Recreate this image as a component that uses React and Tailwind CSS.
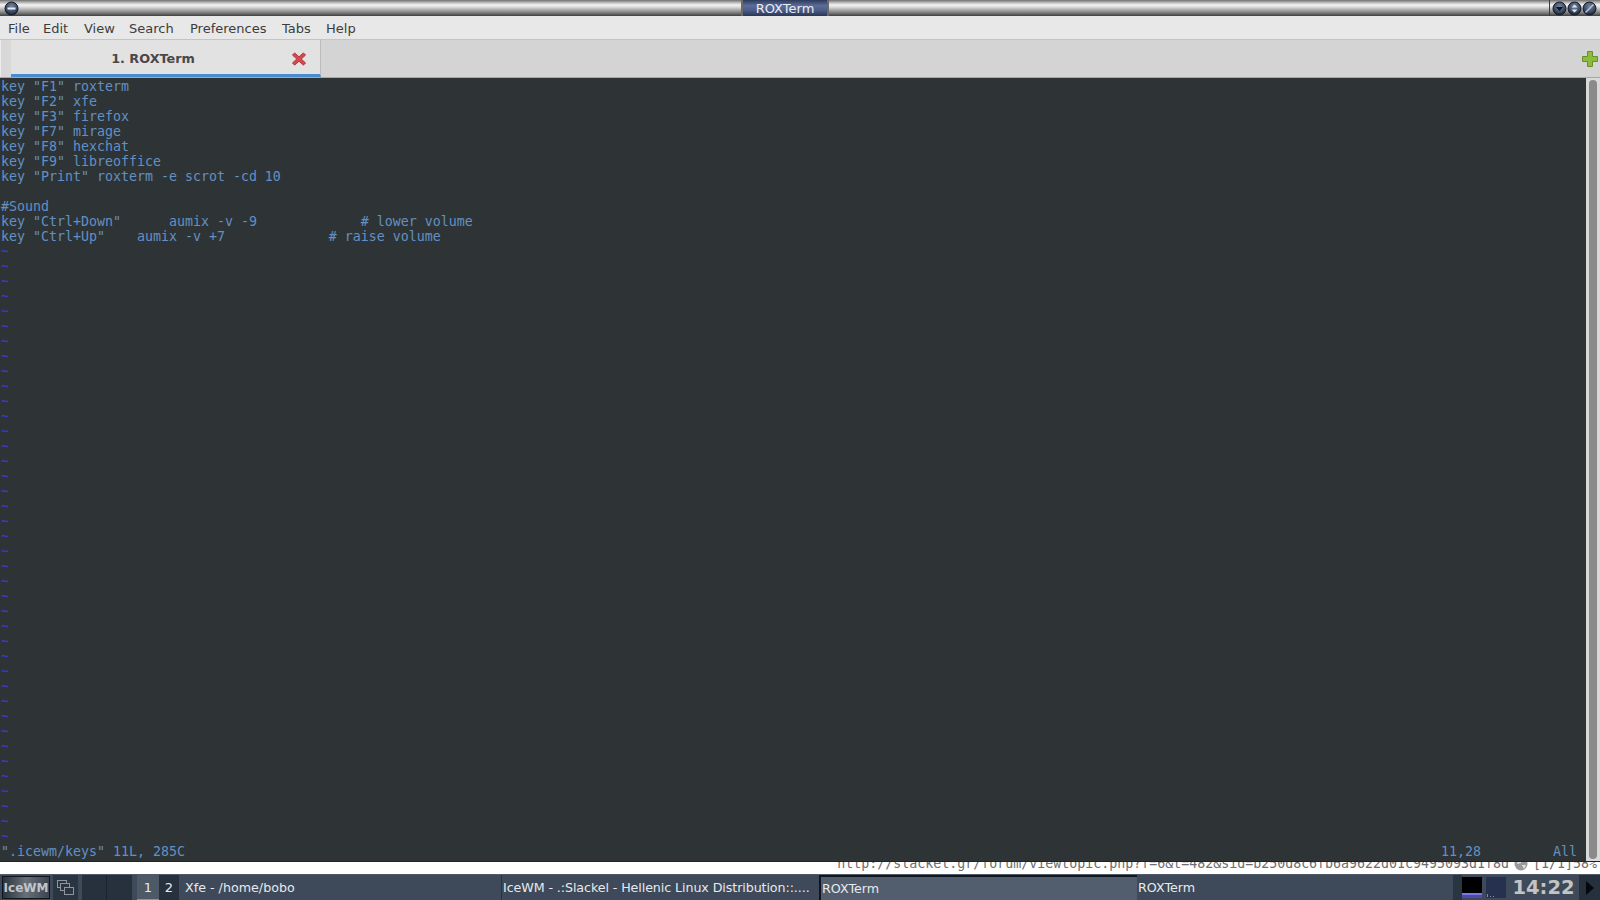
import React from "react";

const lines = [
  'key "F1" roxterm',
  'key "F2" xfe',
  'key "F3" firefox',
  'key "F7" mirage',
  'key "F8" hexchat',
  'key "F9" libreoffice',
  'key "Print" roxterm -e scrot -cd 10',
  ' ',
  '#Sound',
  'key "Ctrl+Down"      aumix -v -9             # lower volume',
  'key "Ctrl+Up"    aumix -v +7             # raise volume',
];
const tildes = Array.from({ length: 40 }, (_, i) => i);
const menus = [
  ["File", "w-[35px]"],
  ["Edit", "w-[41px]"],
  ["View", "w-[45px]"],
  ["Search", "w-[61px]"],
  ["Preferences", "w-[92px]"],
  ["Tabs", "w-[44px]"],
  ["Help", "w-[50px]"],
];

function WinButton({ children }) {
  return (
    <svg width="15" height="15" viewBox="0 0 15 15" className="shrink-0">
      <defs>
        <radialGradient id="wb" cx="50%" cy="35%" r="60%">
          <stop offset="0%" stopColor="#7688a6" />
          <stop offset="70%" stopColor="#3d4a63" />
          <stop offset="100%" stopColor="#20283a" />
        </radialGradient>
      </defs>
      <circle cx="7.5" cy="7.5" r="6.5" fill="url(#wb)" stroke="#141a26" />
      {children}
    </svg>
  );
}

function Task({ className, children }) {
  return <div className={"flex items-center h-full overflow-hidden whitespace-nowrap text-[12.7px] " + className}>{children}</div>;
}

export default function App() {
  return (
    <div className="w-[1600px] h-[900px] flex flex-col overflow-hidden bg-[#e8e8e8] font-['DejaVu_Sans',sans-serif]">
      {/* title bar */}
      <div className="h-[16px] shrink-0 flex items-center bg-[linear-gradient(to_bottom,#6f6f6f_0%,#a8a8a8_12%,#f2f2f2_30%,#e0e0e0_42%,#b0b0b0_60%,#7c7c7c_80%,#3e3e3e_100%)]">
        <div className="pl-[4px] w-[740px] flex items-center">
          <WinButton><rect x="3.5" y="6.5" width="8" height="2" fill="#e8ecf2" /></WinButton>
        </div>
        <div className="w-[88px] h-[16px] ml-[1px] flex items-center justify-center border-x-2 border-[#6a6a6a] bg-[linear-gradient(to_bottom,#2c3a5c,#5a6c98_35%,#4c5c86_65%,#2a3552)] text-[#e8ecf4] text-[13px] leading-none">
          ROXTerm
        </div>
        <div className="flex-1" />
        <div className="flex items-center h-[16px] border-l border-[#3a3a3a] pl-[2px] pr-[3px]">
          <WinButton><path d="M4 6 h7 l-3.5 4 z" fill="#0c1220" /></WinButton>
          <WinButton><path d="M4.5 6.5 L7.5 3.5 L10.5 6.5 z M4.5 8.5 L7.5 11.5 L10.5 8.5 z" fill="#dfe4ec" /></WinButton>
          <WinButton><path d="M3.5 11.5 L11.5 3.5" stroke="#b6c4da" strokeWidth="1.6" /></WinButton>
        </div>
      </div>

      {/* menu bar */}
      <div className="h-[24px] shrink-0 flex items-center pl-[8px] pt-[2px] bg-[#e8e8e8] text-[#3c3c3c] text-[13px] border-b border-[#c4c4c4]">
        {menus.map(([m, w]) => (
          <div key={m} className={w}>{m}</div>
        ))}
      </div>

      {/* tab bar */}
      <div className="h-[38px] shrink-0 flex items-stretch bg-[#d4d4d4] border-b border-[#a8a8a8]">
        <div className="w-[11px] bg-[#d8d8d8] border-l border-[#ececec]" />
        <div className="w-[310px] flex items-center pt-[3px] bg-[#e2e2e2] border-b-[3px] border-[#4a8cd0] border-r border-r-[#bdbdbd]">
          <div className="w-[281px] pl-[3px] text-center font-semibold text-[12.8px] text-[#484848]">1. ROXTerm</div>
          <svg width="14" height="14" viewBox="0 0 16 16">
            <path d="M3 1 L8 5.5 L13 1 L15.5 3.5 L10.5 8 L15.5 12.5 L13 15 L8 10.5 L3 15 L0.5 12.5 L5.5 8 L0.5 3.5 Z" fill="#d9484c" stroke="#a82f33" />
          </svg>
        </div>
        <div className="flex-1" />
        <div className="flex items-center pr-[2px]">
          <svg width="16" height="16" viewBox="0 0 16 16">
            <path d="M5.5 0.5 H10.5 V5.5 H15.5 V10.5 H10.5 V15.5 H5.5 V10.5 H0.5 V5.5 H5.5 Z" fill="#8cbc3e" stroke="#6a8f2a" />
          </svg>
        </div>
      </div>

      {/* terminal */}
      <div className="h-[783px] shrink-0 flex bg-[#2e3436] overflow-hidden">
        <div className="flex-1 pl-px pt-[1px] font-['DejaVu_Sans_Mono',monospace] text-[13.29px] leading-[15px] text-[#6390c4] whitespace-pre">
          {lines.map((l, i) => <div key={i} className="h-[15px]">{l}</div>)}
          {tildes.map((i) => <div key={i} className="h-[15px] text-[#3a3ad0]">~</div>)}
          <div className="h-[15px] flex">
            <span className="w-[1440px]">".icewm/keys" 11L, 285C</span>
            <span className="w-[112px]">11,28</span>
            <span>All</span>
          </div>
        </div>
        <div className="w-[14px] bg-[#d9d9d9] flex justify-center pt-[2px] pb-[2px]">
          <div className="w-[8px] h-full rounded-[4px] bg-[#8a8a8a]" />
        </div>
      </div>

      {/* browser status strip */}
      <div className="h-[13px] shrink-0 bg-white overflow-hidden border-t border-[#1e2327] flex justify-end pr-[3px] font-['DejaVu_Sans_Mono',monospace] text-[13.29px] leading-[15px] text-[#6e6e6e] whitespace-pre">
        <div className="mt-[-6px] flex items-start">
          <span>http://slackel.gr/forum/viewtopic.php?f=6&t=482&sid=b250d8c6fb6a9622d01c9495093d1f8d</span>
          <svg width="14" height="14" viewBox="0 0 14 14" className="mt-[1px] ml-[5px] mr-[5px]">
            <circle cx="7" cy="7" r="6.5" fill="#9a9a9a" />
            <path d="M4 2 L8 3 L7 6 L3 7 Z M8 8 L12 8 L10 12 Z" fill="#e4e4e4" />
          </svg>
          <span className="[word-spacing:-8px]">[1/1] 58%</span>
        </div>
      </div>

      {/* taskbar */}
      <div className="h-[26px] shrink-0 flex items-stretch bg-[#3e4a59] text-[#e6e9ee] border-t border-[#4f5b6a]">
        <div className="w-[53px] pl-[2px] py-[1px] flex">
          <div className="w-[48px] flex items-center justify-center border border-[#11161d] bg-[linear-gradient(to_right,#2a323c,#68707a_50%,#3a434f)] text-[12px] font-semibold text-[#c2c5ca]">IceWM</div>
        </div>
        <div className="w-[25px] flex items-center justify-center bg-[#2a3542]">
          <svg width="19" height="17" viewBox="0 0 19 17" fill="none" stroke="#8f959c" strokeWidth="1">
            <rect x="1.5" y="1.5" width="9" height="7" />
            <rect x="4.5" y="4.5" width="9" height="7" fill="#2a3542" />
            <rect x="8.5" y="8.5" width="9" height="7" fill="#2a3542" />
          </svg>
        </div>
        <div className="w-[4px]" />
        <div className="w-[25px] bg-[#27313e] border-r border-[#1a222c]" />
        <div className="w-[25px] bg-[#27313e]" />
        <div className="w-[5px]" />
        <div className="w-[22px] bg-[#4d5967] border-b border-[#8a95a3] flex items-center justify-center text-[13px] pt-[2px]">1</div>
        <div className="w-[20px] bg-[#27313e] flex items-center justify-center text-[13px]">2</div>
        <div className="w-[4px]" />
        <Task className="w-[318px] pl-[2px] bg-[#3e4a59]">Xfe - /home/bobo</Task>
        <Task className="w-[318px] pl-[1px] tracking-[-0.1px] bg-[#3e4a59] border-l border-[#2a3441]">IceWM - .:Slackel - Hellenic Linux Distribution::....</Task>
        <Task className="w-[318px] pl-[1px] bg-[#525e6d] border-t-2 border-l-2 border-[#10161e] pt-[1px]">ROXTerm</Task>
        <Task className="w-[316px] pl-[1px] bg-[#3e4a59]">ROXTerm</Task>
        <div className="w-[9px] bg-[#2a3542]" />
        <div className="w-[20px] my-[2px] bg-black flex flex-col justify-end">
          <div className="h-[5px] border-t-2 border-[#7a78e8] bg-[#4c4aa8]" />
        </div>
        <div className="w-[1px]" />
        <div className="w-[20px] my-[2px] ml-[3px] bg-[#26314f] flex items-end gap-[2px] pl-[1px] pb-[1px]">
          <div className="w-[1px] h-[3px] bg-[#8a93a8]" />
          <div className="w-[1px] h-[1px] bg-[#8a93a8]" />
          <div className="w-[1px] h-[1px] bg-[#8a93a8]" />
        </div>
        <div className="w-[73px] pl-[2px] flex items-center justify-center font-bold text-[19.5px] text-[#c4c4c4] bg-[#3e4a59]">14:22</div>
        <div className="flex-1 bg-[#27313e] flex items-center justify-center">
          <svg width="8" height="14" viewBox="0 0 8 14"><path d="M0 0 L8 7 L0 14 Z" fill="#05080c" /></svg>
        </div>
      </div>
    </div>
  );
}
